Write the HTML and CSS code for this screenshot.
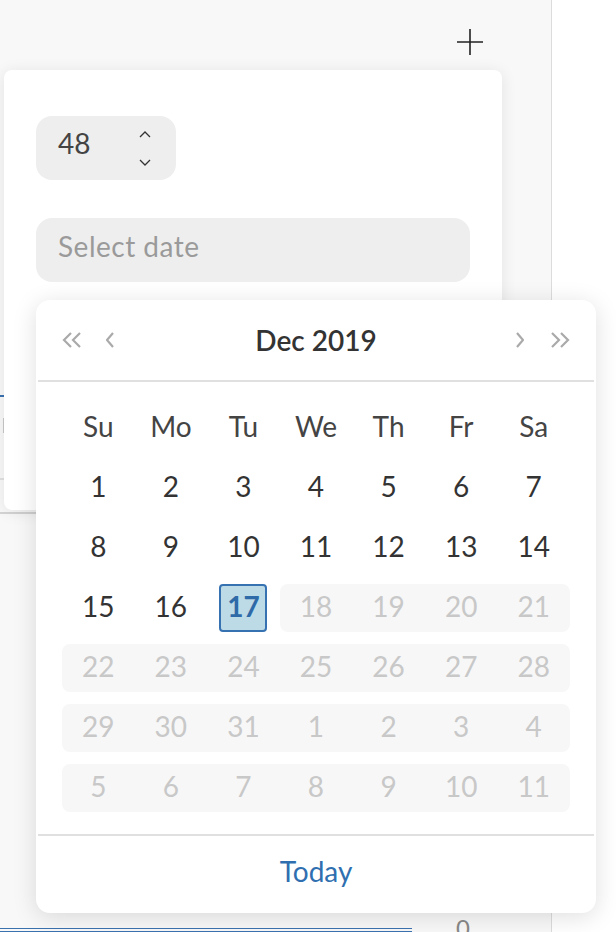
FILE: index.html
```html
<!DOCTYPE html>
<html lang="en">
<head>
<meta charset="utf-8">
<title>Date picker</title>
<link rel="stylesheet" href="styles.css">
</head>
<body>
<div class="page">
  <div class="main">
    <div class="toolbar">
      <svg class="plus" width="26" height="26" viewBox="0 0 26 26"><path d="M13 0V26M0 13H26" stroke="#222" stroke-width="1.6" fill="none"/></svg>
    </div>
    <div class="tabline"></div>
    <div class="row-a"><span class="tick"></span></div>
    <div class="row-b"></div>
    <div class="row-c">
      <div class="cell-line"><div class="dbl"></div></div>
      <div class="cell-num">0</div>
    </div>
  </div>
  <div class="side"></div>
</div>

<div class="card">
  <div class="spinner">
    <span class="num">48</span>
    <span class="arrows">
      <svg width="12" height="7" viewBox="0 0 12 7"><polyline points="1,6 6,1 11,6" fill="none" stroke="#333" stroke-width="1.3"/></svg>
      <svg width="12" height="7" viewBox="0 0 12 7"><polyline points="1,1 6,6 11,1" fill="none" stroke="#333" stroke-width="1.3"/></svg>
    </span>
  </div>
  <div class="date-input">Select date</div>
</div>

<div class="popup">
  <div class="cal-head">
    <div class="nav nav-left">
      <svg width="20" height="16" viewBox="0 0 20 16"><polyline points="9,1 2,8 9,15" fill="none" stroke="#aaa" stroke-width="2.2"/><polyline points="18,1 11,8 18,15" fill="none" stroke="#aaa" stroke-width="2.2"/></svg>
      <svg width="8" height="16" viewBox="0 0 8 16"><polyline points="7,1 1,8 7,15" fill="none" stroke="#aaa" stroke-width="2.2"/></svg>
    </div>
    <div class="title">Dec 2019</div>
    <div class="nav nav-right">
      <svg width="8" height="16" viewBox="0 0 8 16"><polyline points="1,1 7,8 1,15" fill="none" stroke="#aaa" stroke-width="2.2"/></svg>
      <svg width="20" height="16" viewBox="0 0 20 16"><polyline points="2,1 9,8 2,15" fill="none" stroke="#aaa" stroke-width="2.2"/><polyline points="11,1 18,8 11,15" fill="none" stroke="#aaa" stroke-width="2.2"/></svg>
    </div>
  </div>
  <div class="divider"></div>
  <div class="cal-body">
    <div class="wk"><span>Su</span><span>Mo</span><span>Tu</span><span>We</span><span>Th</span><span>Fr</span><span>Sa</span></div>
    <div class="week"><span class="d">1</span><span class="d">2</span><span class="d">3</span><span class="d">4</span><span class="d">5</span><span class="d">6</span><span class="d">7</span></div>
    <div class="week"><span class="d">8</span><span class="d">9</span><span class="d">10</span><span class="d">11</span><span class="d">12</span><span class="d">13</span><span class="d">14</span></div>
    <div class="week"><span class="d">15</span><span class="d">16</span><span class="d sel"><b class="selbox">17</b></span><span class="d off first">18</span><span class="d off">19</span><span class="d off">20</span><span class="d off last">21</span></div>
    <div class="week off"><span class="d">22</span><span class="d">23</span><span class="d">24</span><span class="d">25</span><span class="d">26</span><span class="d">27</span><span class="d">28</span></div>
    <div class="week off"><span class="d">29</span><span class="d">30</span><span class="d">31</span><span class="d">1</span><span class="d">2</span><span class="d">3</span><span class="d">4</span></div>
    <div class="week off"><span class="d">5</span><span class="d">6</span><span class="d">7</span><span class="d">8</span><span class="d">9</span><span class="d">10</span><span class="d">11</span></div>
  </div>
  <div class="divider"></div>
  <div class="cal-foot">Today</div>
</div>
</body>
</html>
```

FILE: styles.css
```css
html, body {
  margin: 0;
  padding: 0;
}
body {
  width: 616px;
  height: 932px;
  overflow: hidden;
  position: relative;
  background: #fff;
  font-family: "Lato", "Noto Sans", sans-serif;
  color: #333;
}
.page {
  display: flex;
  height: 932px;
}
.main {
  width: 551px;
  flex: none;
  background: #f8f8f8;
  border-right: 1px solid #dcdcdc;
}
.side {
  flex: 1;
  background: #fff;
}
.toolbar {
  height: 84px;
  display: flex;
  justify-content: flex-end;
  align-items: center;
  padding-right: 68px;
}
.plus {
  display: block;
}
.tabline {
  margin-top: 311px;
  width: 40px;
  height: 2px;
  background: #3a72b0;
}
.row-a {
  height: 60px;
  padding-top: 21px;
  border-bottom: 2px solid #e0e0e0;
}
.tick {
  display: block;
  margin-left: 3px;
  width: 1px;
  height: 15px;
  background: #c8c8c8;
}
.row-b {
  height: 32px;
  border-bottom: 2px solid #d4d4d4;
}
.row-c {
  padding-top: 400px;
  display: flex;
  align-items: flex-start;
}
.cell-line {
  width: 412px;
  padding-top: 14px;
}
.dbl {
  height: 2px;
  border-top: 1px solid #3a72b0;
  border-bottom: 1px solid #3a72b0;
}
.cell-num {
  margin-left: 44px;
  padding-top: 2px;
  font-size: 24px;
  line-height: 24px;
  color: #888;
}

/* first floating card */
.card {
  position: absolute;
  left: 4px;
  top: 70px;
  width: 498px;
  height: 440px;
  box-sizing: border-box;
  padding: 46px 32px 0;
  background: #fff;
  border-radius: 8px;
  box-shadow: 0 2px 16px rgba(0, 0, 0, 0.09);
}
.spinner {
  width: 140px;
  height: 64px;
  box-sizing: border-box;
  background: #eeeeee;
  border-radius: 16px;
  display: flex;
  align-items: flex-start;
  padding-left: 22px;
}
.num {
  padding-top: 13px;
  font-size: 28px;
  line-height: 28px;
  color: #444;
}
.arrows {
  margin-left: auto;
  margin-right: 25px;
  padding-top: 15px;
  display: flex;
  flex-direction: column;
  gap: 21px;
}
.arrows svg {
  display: block;
}
.date-input {
  margin-top: 38px;
  width: 434px;
  height: 64px;
  box-sizing: border-box;
  background: #eeeeee;
  border-radius: 16px;
  padding: 14px 0 0 22px;
  font-size: 28px;
  line-height: 28px;
  letter-spacing: 0.5px;
  color: #9a9a9a;
}

/* calendar popup */
.popup {
  position: absolute;
  left: 36px;
  top: 300px;
  width: 560px;
  height: 613px;
  background: #fff;
  border-radius: 14px;
  box-shadow: 0 4px 24px rgba(0, 0, 0, 0.13);
}
.cal-head {
  height: 80px;
  display: flex;
  align-items: center;
  padding: 0 26px;
}
.nav {
  width: 54px;
  display: flex;
  align-items: center;
}
.nav svg {
  display: block;
}
.nav-left {
  gap: 24px;
}
.nav-right {
  gap: 26px;
  justify-content: flex-end;
}
.title {
  flex: 1;
  text-align: center;
  font-size: 28px;
  font-weight: 600;
  color: #333;
  line-height: 80px;
}
.divider {
  height: 2px;
  margin: 0 2px;
  background: #e0e0e0;
}
.cal-body {
  padding: 22px 26px;
}
.wk, .week {
  display: grid;
  grid-template-columns: repeat(7, 1fr);
  height: 48px;
  font-size: 28px;
  text-align: center;
}
.wk {
  line-height: 44px;
  color: #444;
}
.week {
  margin-top: 12px;
  line-height: 44px;
  color: #333;
}
.week.off {
  background: #f7f7f7;
  border-radius: 8px;
  color: #c8c8c8;
}
.d.off {
  background: #f7f7f7;
  color: #c8c8c8;
}
.d.off.first {
  border-radius: 8px 0 0 8px;
}
.d.off.last {
  border-radius: 0 8px 8px 0;
}
.d.sel {
  display: flex;
  justify-content: center;
}
.selbox {
  width: 48px;
  height: 48px;
  box-sizing: border-box;
  border: 2px solid #3672b2;
  border-radius: 4px;
  background: #bddbe7;
  color: #2f6aa8;
  font-weight: 700;
  line-height: 40px;
}
.cal-foot {
  height: 77px;
  line-height: 70px;
  text-align: center;
  font-size: 28px;
  color: #2f6fb0;
}
```
